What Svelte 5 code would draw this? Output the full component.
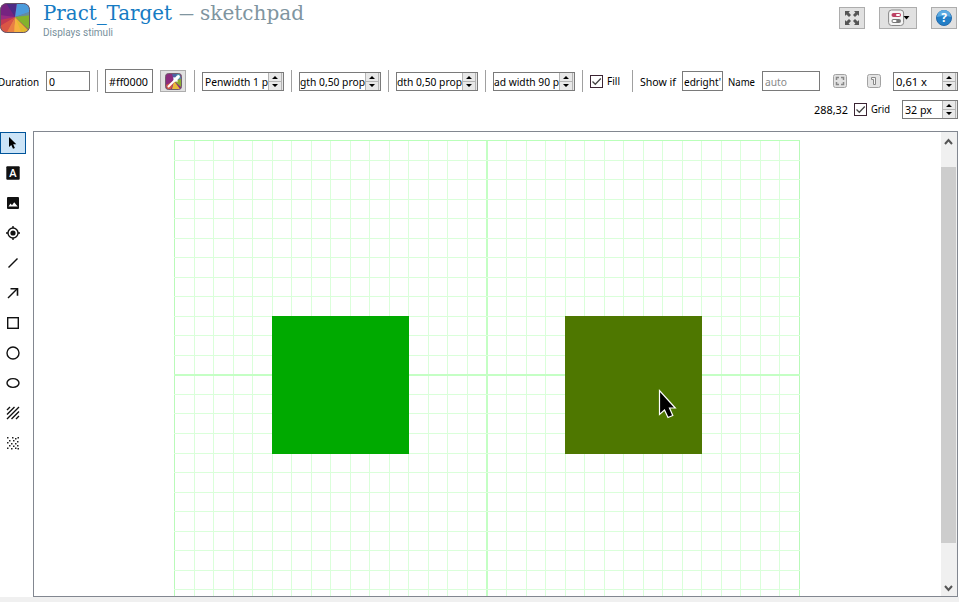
<script>
  const STEP = 625 / 32;
  const columns = Array.from({ length: 33 }, (_, i) => ({ p: Math.round(140 + i * STEP), strong: i === 0 || i === 16 || i === 32, mid: i === 16 }));
  const rows = Array.from({ length: 24 }, (_, i) => ({ p: Math.round(8 + i * STEP), strong: i === 0 || i === 12, mid: i === 12 }));
  const tools = ['pointer', 'text', 'image', 'fixdot', 'line', 'arrow', 'rect', 'circle', 'ellipse', 'gabor', 'noise'];
  const dots = [[1,1],[6,1],[9,2],[11.5,1],[3,4],[7,4],[11,5],[1,6],[5,7],[9,7],[3,9],[7,9.5],[11,9],[1,11.5],[5,12],[9,11.5],[11.5,12]];
</script>

{#snippet label(text, width, color = '#000')}
  <svg class="label" {width} height="16"><text x="0" y="13" textLength={width} lengthAdjust="spacingAndGlyphs" fill={color}>{text}</text></svg>
{/snippet}

{#snippet check()}
  <svg class="check" width="13" height="13" viewBox="0 0 13 13"><rect x=".5" y=".5" width="12" height="12" fill="#fff" stroke="#3b2433"/><path d="M2.5 6.5l2.8 2.8 5.5-5.8" fill="none" stroke="#444" stroke-width="1.3"/></svg>
{/snippet}

{#snippet spin(text, textWidth, width, pad = 2)}
  <div class="spin" style:width="{width}px">
    <div class="value" style:padding-left="{pad}px">{@render label(text, textWidth)}</div>
    <div class="steps">
      <svg width="15" height="17" viewBox="0 0 15 17"><path d="M0 0h15v17H0z" fill="#e8e8e8"/><path d="M.5 0v17M0 8.5h14M13.500 0v17" stroke="#b4b4b4"/><path d="M4 6l3-3 3 3zM4 11h6l-3 3z"/></svg>
    </div>
  </div>
{/snippet}

{#snippet sep()}<div class="sep"></div>{/snippet}

<div class="app">
  <header>
    <svg class="logo" width="31" height="31" viewBox="0 0 31 31">
      <defs><clipPath id="tile"><rect x=".5" y=".5" width="29" height="29" rx="6"/></clipPath></defs>
      <g clip-path="url(#tile)">
        <path d="M0 0h31v31H0z" fill="#9a2b83"/>
        <path d="M15 14L0 12V0h8z" fill="#762381"/><path d="M15 14L6 0h11z" fill="#4d2a86"/>
        <path d="M15 14L17 0h14v9z" fill="#4b9bdc"/><path d="M15 14l16-6v6z" fill="#658ba0"/>
        <path d="M15 14l16-2v17z" fill="#83b22c"/><path d="M15 14l15 15-11 2z" fill="#e2b92f"/>
        <path d="M15 14l7 17h-9z" fill="#f7b240"/><path d="M15 14l-1 17H5z" fill="#e98044"/>
        <path d="M15 14L6 31H0v-9z" fill="#da5645"/><path d="M15 14L0 23v-6z" fill="#c33a50"/>
      </g>
      <rect x=".5" y=".5" width="29" height="29" rx="6" fill="none" stroke="#635565"/>
    </svg>
    <svg class="title" width="270" height="40">
      <text class="name" x="0" y="20" textLength="129" lengthAdjust="spacingAndGlyphs">Pract_Target</text>
      <text class="type" x="136" y="20" textLength="15" lengthAdjust="spacingAndGlyphs">—</text>
      <text class="type" x="157" y="20" textLength="104" lengthAdjust="spacingAndGlyphs">sketchpad</text>
      <text class="description" x="0" y="36" textLength="70" lengthAdjust="spacingAndGlyphs">Displays stimuli</text>
    </svg>
    <div class="actions">
      <button class="small" aria-label="Pop out"><svg width="14" height="14" viewBox="0 0 14 14" fill="#555"><path d="M0 0h5L3.6 1.4 6 4 4 6 1.4 3.6 0 5zM14 0v5l-1.4-1.4L10 6 8 4l2.4-2.6L9 0zM0 14V9l1.4 1.4L4 8l2 2-2.4 2.6L5 14zM14 14H9l1.4-1.4L8 10l2-2 2.6 2.4L14 9z"/></svg></button>
      <button class="wide" aria-label="View"><svg width="24" height="18" viewBox="0 0 24 18"><rect x=".6" y="1" width="15" height="15.5" rx="3" fill="#f5f5f5" stroke="#888"/><rect x="3.500" y="4" width="9.500" height="4" rx="2" fill="#bd4264"/><rect x="8" y="5" width="4" height="2" rx="1" fill="#fff"/><rect x="3.500" y="10" width="9.500" height="4" rx="2" fill="#777"/><rect x="4.500" y="11" width="4" height="2" rx="1" fill="#fff"/><path d="M15.500 7h6l-3 3.500z"/></svg></button>
      <button class="small" aria-label="Help"><svg width="16" height="16" viewBox="0 0 16 16"><circle cx="8" cy="8" r="7.5" fill="#237fc7" stroke="#266aab"/><path d="M1 7a7 7 0 0 1 14 0Q9 5 1 7z" fill="#5aaae2"/><text class="question" x="8" y="12.3" text-anchor="middle">?</text></svg></button>
    </div>
  </header>

  <div class="toolbar">
    <div class="duration">{@render label('Duration', 41)}</div>
    <div class="field" style:width="44px">{@render label('0', 6)}</div>
    {@render sep()}
    <div class="field color">{@render label('#ff0000', 39)}</div>
    <div class="picker"><svg width="17" height="17" viewBox="0 0 17 17"><rect x=".5" y=".5" width="16" height="16" rx="3" fill="#8b2b7d"/><path d="M9 8L7 1h6z" fill="#4d63a5"/><path d="M9 8l3-7h3l1 5z" fill="#4b99b0"/><path d="M9 8l7-2v8z" fill="#8baf31"/><path d="M9 8l6 8H7z" fill="#e9bb39"/><path d="M9 8l-3 8H2l-1-4z" fill="#d45b47"/><rect x=".5" y=".5" width="16" height="16" rx="3" fill="none" stroke="#715d6c"/><path d="M3.500 13.500L10 7" stroke="#fff" stroke-width="2" stroke-linecap="round"/><path d="M8.500 4.500l4 4" stroke="#fff" stroke-width="1.6"/><path d="M10 7l3.300-3.300" stroke="#fff" stroke-width="3.200" stroke-linecap="round"/></svg></div>
    {@render sep()}
    {@render spin('Penwidth 1 p', 63, 82)}
    {@render sep()}
    {@render spin('gth 0,50 prop', 65, 82, 0)}
    {@render sep()}
    {@render spin('dth 0,50 prop', 65, 82, 0)}
    {@render sep()}
    {@render spin('ad width 90 p', 65, 82, 0)}
    {@render sep()}
    <div class="option fill">{@render check()}{@render label('Fill', 13)}</div>
    {@render sep()}
    <div class="caption">{@render label('Show if', 36)}</div>
    <div class="field cond">{@render label("edright'", 37)}</div>
    <div class="caption">{@render label('Name', 27)}</div>
    <div class="field auto">{@render label('auto', 22, '#888')}</div>
    <svg class="tiny" width="14" height="14" viewBox="0 0 14 14"><rect x=".5" y=".5" width="13" height="13" rx="2" fill="#e2e2e2" stroke="#a2a2a2"/><path d="M3.5 6V3.5H6M8 3.5h2.5V6M10.5 8v2.5H8M6 10.5H3.5V8" fill="none" stroke="#888" stroke-width="1.5"/></svg>
    <svg class="tiny second" width="14" height="14" viewBox="0 0 14 14"><rect x=".5" y=".5" width="13" height="13" rx="2" fill="#e4e4e4" stroke="#a2a2a2"/><path d="M4.500 3.500h4v7h-2v-5h-2z" fill="#f5f5f5" stroke="#888"/></svg>
    {@render spin('0,61 x', 31, 65)}
  </div>
  <div class="toolbar lower">
    {@render label('288,32', 34)}
    <div class="option grid">{@render check()}{@render label('Grid', 19)}</div>
    {@render spin('32 px', 27, 56)}
  </div>

  <main>
    <nav>
      {#each tools as tool}
        <div class="tool" class:active={tool === 'pointer'}>
          <svg width="14" height="14" viewBox="0 0 14 14" fill="none" stroke="#111" stroke-width="1.4">
            {#if tool === 'pointer'}<path d="M3 1v10l2.3-2.1L7 12.700l1.900-.8-1.700-3.700H10.300z" fill="#000" stroke="none"/>
            {:else if tool === 'text'}<rect x=".3" y=".3" width="13.4" height="13.4" rx="1" fill="#111" stroke="none"/><text class="letter" x="7" y="11.300" text-anchor="middle">A</text>
            {:else if tool === 'image'}<rect x="1" y="1" width="12" height="12" rx="1" fill="#111" stroke="none"/><path d="M2.5 10.5l2-3 1.5 1.7 2.2-3 3.5 4.3z" fill="#fff" stroke="none"/>
            {:else if tool === 'fixdot'}<circle cx="7" cy="7" r="5"/><circle cx="7" cy="7" r="2.6" fill="#111" stroke="none"/><path d="M7 0v2M7 12v2M0 7h2M12 7h2"/>
            {:else if tool === 'line'}<path d="M2.5 11.5l9-9"/>
            {:else if tool === 'arrow'}<path d="M2 12l9-9"/><path d="M4.5 2.7h7v7" stroke-width="1.6"/>
            {:else if tool === 'rect'}<rect x="1.7" y="1.7" width="10.6" height="10.6"/>
            {:else if tool === 'circle'}<circle cx="7" cy="7" r="6"/>
            {:else if tool === 'ellipse'}<ellipse cx="7" cy="7" rx="6" ry="4.4"/>
            {:else if tool === 'gabor'}<path d="M1 4l3-3M1 8.5L8.5 1M1 13L13 1M5.5 13L13 5.5M10 13l3-3"/>
            {:else}{#each dots as [x, y]}<rect {x} {y} width="1.5" height="1.5" fill="#222" stroke="none"/>{/each}{/if}
          </svg>
        </div>
      {/each}
    </nav>
    <div class="frame">
      <svg class="canvas" width="907" height="464" viewBox="0 0 907 464" shape-rendering="crispEdges">
        {#each columns as c}<rect x={c.mid ? c.p - 1 : c.p} y="8" width={c.mid ? 2 : 1} height="456" fill={c.mid ? '#c4ffc4' : c.strong ? '#b9fab9' : '#daffda'}/>{/each}
        {#each rows as r}<rect x="140" y={r.p} width="626" height={r.mid ? 2 : 1} fill={r.mid ? '#c4ffc4' : r.strong ? '#b9ffb9' : '#daffda'}/>{/each}
        <rect x="238" y="184" width="137" height="138" fill="#00aa00"/>
        <rect x="531" y="184" width="137" height="138" fill="#4e7700"/>
        <path d="M625.5 258.500v24l5-4.500 3.500 7.500 4.800-2-3.300-7.500h5.800z" fill="#000" stroke="#fff" stroke-width="1.2" shape-rendering="auto"/>
      </svg>
      <div class="scroll">
        <svg width="15" height="35"><path d="M4 12l3.500-4 3.500 4" fill="none" stroke="#555" stroke-width="2"/></svg>
        <div class="thumb"></div>
        <svg width="15" height="53"><path d="M4 43l3.500 4 3.500-4" fill="none" stroke="#555" stroke-width="2"/></svg>
      </div>
    </div>
  </main>
  <footer></footer>
</div>

<style>
  :global(body) { background: #fff; }
  .app { width: 959px; height: 609px; overflow: hidden; background: #fff; font-family: "Noto Sans", "Open Sans", sans-serif; }
  .app, .app * { box-sizing: border-box; }
  svg { display: block; flex: none; }
  header { height: 69px; display: flex; }
  .logo { margin: 3px 12px 0 0; }
  .title { overflow: visible; }
  .name, .type { font: 21px "DejaVu Serif", serif; }
  .name { fill: #167bc3; }
  .type { fill: #8095a0; }
  .description { font: 10.5px Roboto, sans-serif; fill: #78909c; }
  .actions { margin: 7px 2px 0 auto; display: flex; align-items: flex-start; }
  button { height: 22px; padding: 0; border: 1px solid #adadad; background: #e1e1e1; display: flex; align-items: center; justify-content: center; }
  .small { width: 26px; }
  .wide { width: 38px; margin: 0 14px; padding-left: 4px; }
  .question { font: bold 12px "Open Sans", sans-serif; fill: #fff; }
  .toolbar { height: 24px; display: flex; align-items: center; }
  .label { overflow: visible; }
  .label text { font-size: 11.5px; }
  .duration { width: 46px; margin-left: -2px; }
  .field { height: 20px; margin-left: 2px; border: 1px solid #7a7a7a; background: #fff; display: flex; align-items: center; padding-left: 2px; overflow: hidden; flex: none; }
  .sep { width: 1px; height: 22px; margin: 0 7px; background: #a0a0a0; flex: none; }
  .color { width: 48px; height: 24px; margin-left: 0; padding-left: 3px; }
  .picker { width: 26px; height: 22px; margin-left: 7px; margin-right: 1px; border: 1px solid #adadad; background: #e1e1e1; display: flex; align-items: center; justify-content: center; flex: none; }
  .spin { height: 19px; border: 1px solid #7a7a7a; background: #fff; display: flex; align-items: center; flex: none; }
  .value { flex: 1; min-width: 0; height: 17px; overflow: hidden; display: flex; align-items: center; }
  .steps { width: 15px; }
  .option { display: flex; align-items: center; gap: 4px; flex: none; }
  .fill { width: 35px; }
  .fill .label, .grid .label { margin-top: -2px; }
  .caption { flex: none; }
  .cond { width: 41px; margin: 0 5px 0 6px; padding-left: 1px; }
  .auto { width: 58px; margin: 0 13px 0 7px; }
  .second { margin: 0 12px 0 20px; }
  .lower { height: 32px; padding-left: 814px; }
  .grid { margin: 0 12px 0 6px; }
  main { display: flex; height: 472px; padding-top: 6px; }
  nav { width: 33px; flex: none; display: flex; flex-direction: column; gap: 8px; padding-top: 1px; }
  .tool { width: 26px; height: 22px; display: flex; align-items: center; justify-content: center; }
  .active { border: 1px solid #00549a; background: #cce4f7; }
  .letter { font: 600 11px "Open Sans", sans-serif; fill: #fff; stroke: none; }
  .frame { width: 925px; height: 466px; border: 1px solid #828790; display: flex; flex: none; }
  .scroll { width: 16px; background: #f0f0f0; display: flex; flex-direction: column; }
  .thumb { height: 376px; width: 15px; background: #cdcdcd; }
  footer { height: 5px; background: #f0f0f0; }
</style>
